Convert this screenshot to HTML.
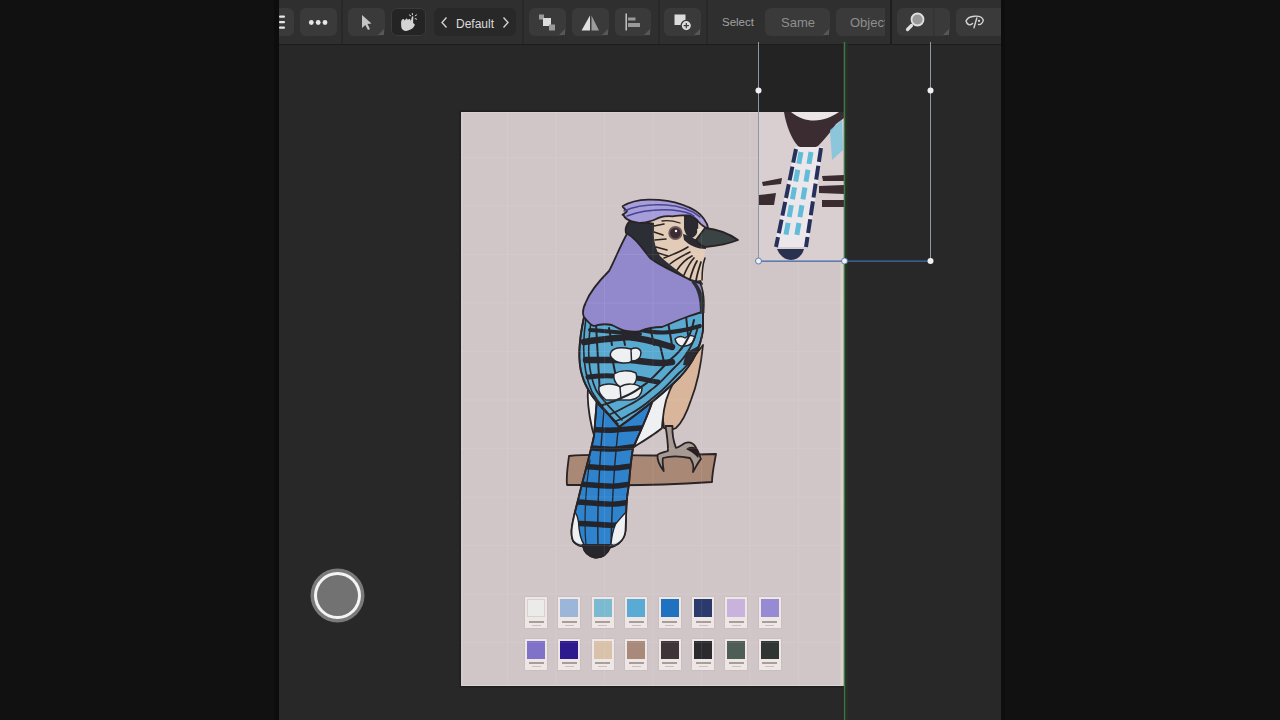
<!DOCTYPE html>
<html><head><meta charset="utf-8">
<style>
*{margin:0;padding:0;box-sizing:border-box}
html,body{width:1280px;height:720px;overflow:hidden;background:#111111;font-family:"Liberation Sans",sans-serif}
#strip{position:absolute;left:274px;top:0;width:5px;height:720px;background:#0d0d0d}
#strip2{position:absolute;left:1001px;top:0;width:4px;height:720px;background:#0e0e0e}
#panel{position:absolute;left:279px;top:0;width:722px;height:720px;background:#282828;overflow:hidden}
#tb{position:absolute;left:0;top:0;width:722px;height:45px;background:#2f2f2f;border-bottom:1px solid #1c1c1c}
.btn{position:absolute;top:8px;height:28px;background:#3a3a3a;border-radius:6px}
.sel{background:#242424;border:1px solid #3a3a3a}
.sep{position:absolute;top:0;width:2px;height:44px;background:#282828}
.corner{position:absolute;right:1px;bottom:1px;width:0;height:0;border-left:6px solid transparent;border-bottom:6px solid #575757}
.txt{position:absolute;color:#d6d6d6;font-size:12px;line-height:14px;white-space:nowrap}
#canvas{position:absolute;left:182px;top:112px;width:383px;height:574px;background:#d1c6c7;box-shadow:inset 2px 0 0 #d0cdd0,inset 0 -1px 0 #dcd5d8,inset 0 1px 0 #d9d0d2,0 0 0 1.5px #1f1f1f}
svg{position:absolute;left:0;top:0}
.sw{position:absolute;width:22px;height:31px;background:#eee7e5;box-shadow:0 0 1.5px rgba(0,0,0,0.12)}
.sw i{position:absolute;left:2px;top:2px;width:18px;height:18px;display:block}
.sw b{position:absolute;left:3.5px;top:23.5px;width:15px;height:2.2px;background:#8f8580;display:block;opacity:.75}
.sw u{position:absolute;left:6.5px;top:27.5px;width:9px;height:1px;background:#c9bfbc;display:block}
</style></head>
<body>
<div id="strip"></div><div id="strip2"></div>
<div id="panel">
  <div id="tb">
    <div class="btn" style="left:-20px;width:35px"></div>
    <div class="btn" style="left:21px;width:37px"></div>
    <div class="sep" style="left:62px"></div>
    <div class="btn" style="left:69px;width:37px"><div class="corner"></div></div>
    <div class="btn sel" style="left:112px;width:35px"></div>
    <div class="btn" style="left:155px;width:82px;background:#282828"></div>
    <div class="txt" style="left:177px;top:16.5px;font-size:12px;color:#dcdcdc">Default</div>
    <div class="sep" style="left:243px"></div>
    <div class="btn" style="left:250px;width:37px"><div class="corner"></div></div>
    <div class="btn" style="left:293px;width:37px"><div class="corner"></div></div>
    <div class="btn" style="left:336px;width:36px"><div class="corner"></div></div>
    <div class="sep" style="left:379px"></div>
    <div class="btn" style="left:385px;width:37px"><div class="corner"></div></div>
    <div class="sep" style="left:427px"></div>
    <div class="txt" style="left:443px;top:15px;color:#a2a2a2;font-size:11.5px">Select</div>
    <div class="btn" style="left:486px;width:65px"><div class="corner"></div></div>
    <div class="txt" style="left:502px;top:16px;color:#8e8e8e;font-size:13px">Same</div>
    <div class="btn" style="left:557px;width:49px;border-radius:6px 0 0 6px"></div>
    <div class="txt" style="left:571px;top:15.5px;color:#8e8e8e;font-size:13px;width:35px;overflow:hidden">Object</div>
    <div class="sep" style="left:611px;background:#1e1e1e"></div>
    <div class="btn" style="left:618px;width:53px"><div class="corner"></div></div>
    <div class="btn" style="left:677px;width:60px"></div>
  </div>
  <div id="canvas"></div>
  <div style="position:absolute;left:480px;top:45px;width:86px;height:67px;background:#232323"></div>
</div>

<svg width="1280" height="720" viewBox="0 0 1280 720">
<defs>
 <clipPath id="tailc"><path d="M597,398 L594,436 C590,455 584,475 578,500 C575,512 572,522 571.5,531 C571.5,537 572,540 574,542 C577,545 580,546 583,546 C584,551 588,556 595,557.5 C602,558 607,555 610,547.5 C614,546 617,545 619,543 C623,540 625,535 625.5,531 C626,523 626,513 626.5,505 C627,495 628,490 629,484 C630,470 631,460 633,448 C640,432 650,412 656,390 Z"/></clipPath>
 <clipPath id="wingc"><path d="M584,317 C579,340 578,362 582,375 C586,390 598,405 608,414 L619,427 C640,412 662,395 680,377 C694,362 701,345 703,330 L703,312 Z"/></clipPath>
</defs>
<g stroke="#2a2326" stroke-width="1.8" stroke-linejoin="round" stroke-linecap="round">
 <!-- perch -->
 <path d="M569,456 C600,453 640,457 680,455 L716,454 C714,465 712,474 712,482 C680,484 640,486 600,485 L567,485 C566,475 568,465 569,456 Z" fill="#a98876"/>
 <!-- tan belly -->
 <path d="M703,345 C701,365 697,385 691,400 C687,412 683,422 676,428 C672,430 668,430 664,428 C662,418 663,405 666,395 C668,388 672,382 680,375 Z" fill="#d8b59b"/>
 <!-- legs -->
 <path d="M665.5,426 C667,435 668,443 668,451 C664,452 659,453 657.5,455 C657,460 660,466 663.7,471 C663,465 662,461 663,458 C670,456 680,456 690,458 C693,462 694,467 693,472 C696,467 698,462 701,459 C699,453 697,449 695,446 C692,442 688,442 685,443 C682,445 679,447 676,448 C673,440 672,434 672.5,426 Z" fill="#a69a93"/>
 <path d="M686,449 C690,451 695,454 698,458 C699,456 700,453 697,449 C694,446 690,446 686,449 Z" fill="#2a1e22" stroke="none"/>
 <!-- white under feathers -->
 <path d="M680,372 C672,385 666,395 664,410 C663,418 662,424 662,428 C658,432 645,440 634,447 L654,390 C662,386 670,380 680,372 Z" fill="#eef0f2"/>
 <path d="M588,386 C587,400 589,415 592,428 C593,432 594,436 595,437 L598,400 Z" fill="#eef0f2"/>
 <!-- tail -->
 <path d="M597,398 L594,436 C590,455 584,475 578,500 C575,512 572,522 571.5,531 C571.5,537 572,540 574,542 C577,545 580,546 583,546 C584,551 588,556 595,557.5 C602,558 607,555 610,547.5 C614,546 617,545 619,543 C623,540 625,535 625.5,531 C626,523 626,513 626.5,505 C627,495 628,490 629,484 C630,470 631,460 633,448 C640,432 650,412 656,390 Z" fill="#2f82cc"/>
 <g clip-path="url(#tailc)" stroke="#23252c" fill="none">
  <path d="M570,429 C585,428 600,431 615,430 C630,429 645,427 660,428" stroke-width="5.5"/>
  <path d="M570,447 C585,446 600,450 615,449 C625,448 635,446 640,447" stroke-width="5.5"/>
  <path d="M570,466 C585,465 600,469 615,468 C625,467 635,465 640,466" stroke-width="5.5"/>
  <path d="M570,484 C585,483 600,487 615,486 C625,485 635,483 640,484" stroke-width="5.5"/>
  <path d="M570,502 C585,501 600,505 615,504 C625,503 635,501 640,502" stroke-width="5.5"/>
  <path d="M570,524 C585,522 600,526 615,525 C625,524 635,522 640,523" stroke-width="5.5"/>
  <path d="M605,400 C601,440 597,500 598,545" stroke-width="1.4"/>
  <path d="M622,400 C616,440 612,500 611,545" stroke-width="1.4"/>
  <path d="M590,460 C585,490 584,525 586,545" stroke-width="1.2"/>
  <path d="M568,504 C574,508 578,516 578.5,522 C579,532 581,540 584,544.5 L566,548 Z" fill="#eef0f2" stroke="#23252c" stroke-width="1.4"/>
  <path d="M630,508 C624,514 619,520 615.6,524 C613,530 611.5,538 611,544.5 L632,548 Z" fill="#eef0f2" stroke="#23252c" stroke-width="1.4"/>
  <path d="M568,536 C572,540 578,543 583,544 L566,548 Z M630,536 C624,540 617,543 611,544 L632,548 Z" fill="#c6daee" stroke="none"/>
  <path d="M583,544 C584,551 588,556 595,557.5 C602,558 607,555 610.5,544 Z" fill="#26262c" stroke="none"/>
 </g>
 <path d="M597,398 L594,436 C590,455 584,475 578,500 C575,512 572,522 571.5,531 C571.5,537 572,540 574,542 C577,545 580,546 583,546 C584,551 588,556 595,557.5 C602,558 607,555 610,547.5 C614,546 617,545 619,543 C623,540 625,535 625.5,531 C626,523 626,513 626.5,505 C627,495 628,490 629,484 C630,470 631,460 633,448 C640,432 650,412 656,390 Z" fill="none"/>
 <!-- wing -->
 <path d="M584,317 C579,340 578,362 582,375 C586,390 598,405 608,414 L619,427 C640,412 662,395 680,377 C694,362 701,345 703,330 L703,312 Z" fill="#58aad0"/>
 <g clip-path="url(#wingc)" fill="none" stroke="#26262c">
  <!-- top bar under purple -->
  <path d="M590,330 C605,331 620,333 640,334" stroke-width="4"/>
  <!-- dark bars -->
  <path d="M584,342 C595,340 605,339 628,337 C640,338 650,340 672,347" stroke-width="6.5"/>
  <path d="M586,360 C598,360 610,360 630,360 C645,361 655,365 672,362" stroke-width="6.5"/>
  <path d="M588,377 C598,376 606,375 612,376 M636,378 C645,379 650,381 658,382" stroke-width="5"/>
  <path d="M640,330 C655,333 670,335 700,326" stroke-width="4"/>
  <!-- vertical bars -->
  <path d="M596,324 L600,395 M609,328 L612,345 M613,362 L616,377 M622,330 L625,345 M650,326 L654,345 M660,345 L664,362 M668,322 L672,345 M686,316 L688,335" stroke-width="2"/>
  <!-- left edge strip lines -->
  <path d="M586,318 C582,345 583,372 592,392 C598,402 606,412 618,424" stroke-width="1.6"/>
  <path d="M591,322 C587,348 588,372 596,390 C602,400 610,408 622,420" stroke-width="1.6"/>
  <!-- scallops -->
  <path d="M611,352 C614,347 622,347 631,349 C636,347 640,348 641,352 C641,357 638,361 632,361 C628,364 617,364 613,359 C610,357 610,354 611,352 Z" fill="#eef0f2" stroke-width="1.5"/>
  <path d="M631,349 L631.5,361" stroke-width="1.5"/>
  <path d="M614,374 C620,370 630,370 636,373 C638,380 635,386 627,388 C618,388 613,382 614,374 Z" fill="#eef0f2" stroke-width="1.5"/>
  <path d="M599,387 C604,383 614,383 620,387 C626,383 636,383 642,388 C642,394 638,399 630,400 L606,400 C601,396 598,391 599,387 Z" fill="#eef0f2" stroke-width="1.5"/>
  <path d="M620,387 L621,399" stroke-width="1.5"/>
  <path d="M675,339 C678,336 682,336 685,338 C688,335 692,335 695,337 C694,342 690,346 685,346 C680,347 676,344 675,339 Z" fill="#eef0f2" stroke-width="1.4"/>
  <!-- band lines -->
  <path d="M694,320 C690,340 680,352 671,359 C660,370 655,376 648,382 C640,388 635,392 628,395 C618,400 610,403 600,406" stroke-width="2"/>
  <path d="M698,326 C694,345 686,357 675,367 C665,377 660,384 651,390 C643,397 636,402 627,406 C620,410 614,413 606,416" stroke-width="1.8"/>
  <path d="M702,336 C699,350 690,364 679,373 C670,382 664,390 654,397 C646,404 638,410 630,414 C624,418 618,421 612,422" stroke-width="1.8"/>
  <path d="M704,346 C700,360 692,370 682,378 C674,386 668,394 658,401 C650,408 642,414 634,419" stroke-width="1.8"/>
  <!-- dark shadow patch -->
  <path d="M686,352 C692,350 699,346 704,342 L704,360 C698,364 690,366 683,365 Z" fill="#2b2b31" stroke="none"/>
 </g>
 <path d="M584,317 C579,340 578,362 582,375 C586,390 598,405 608,414 L619,427 C640,412 662,395 680,377 C694,362 701,345 703,330 L703,312 Z" fill="none"/>
 <!-- purple back -->
 <path d="M628,232 C620,246 614,262 609,271 C600,280 590,292 586,302 C583,308 582,313 584,317 C588,322 592,326 594,326 C600,324 607,324 612,325 C616,327 620,330 626,331 C632,332 636,332 640,331 C648,328 655,327 662,327 C672,323 678,320 684,318 C692,315 698,313 703,312 C705,300 703,290 700,282 C690,276 670,268 655,260 C645,250 638,238 628,232 Z" fill="#9189cc"/>
 <!-- dark neck -->
 <path d="M630,221 C627,224 625,229 626,233 C636,238 642,248 650,258 C660,266 675,272 690,280 L702,284 C695,270 680,262 668,255 C660,245 655,235 654,224 C645,222 638,221 630,221 Z" fill="#2c2e35"/>
 <path d="M690,277 C697,282 702,290 704,300 L704.5,313 L700,313 C700,300 698,290 692,283 Z" fill="#2c2e35" stroke="none"/>
 <!-- face -->
 <path d="M654,222 C665,218 680,214 692,216 L706,228 L706,247 C704,255 702,265 704,279 C698,282 690,280 682,274 C674,268 666,262 660,256 C655,248 653,238 654,230 Z" fill="#e2ccb7" stroke="none"/>
 <g fill="none" stroke="#2a2326" stroke-width="1.6">
  <path d="M654,226 L664,224 M654,232 L663,235 M655,240 L666,239 M656,247 L667,250 M658,253 L668,256"/>
  <path d="M664,258 C672,255 680,252 688,247" stroke-width="1.5"/>
  <path d="M670,264 C676,259 684,255 690,252" stroke-width="1.6"/>
  <path d="M677,270 C681,264 686,259 692,256" stroke-width="1.7"/>
  <path d="M684,275 C687,268 690,262 694,258" stroke-width="1.7"/>
  <path d="M690,279 C692,272 694,266 697,261" stroke-width="1.8"/>
  <path d="M696,281 C697,274 699,268 701,262" stroke-width="1.8"/>
  <path d="M702,280 C702,273 702,266 705,258" stroke-width="1.6"/>
  <path d="M662,221 C668,220 674,221 680,223" stroke-width="1.3"/>
 </g>
 <path d="M684,215 C690,212 697,215 698,222 C699,230 697,236 692,238 C688,238 685,234 684,228 Z" fill="#2a2a30" stroke="none"/>
 <path d="M683,234 C690,236 696,240 706,244 L706,249 C698,249 690,246 684,240 Z" fill="#2a2a30" stroke="none"/>
 <path d="M697,229 L705,228 L705,238 L698,236 Z" fill="#e6dccb" stroke="none"/>
 <!-- crest -->
 <path d="M622.5,206.3 C628,203 638,200 648,199.7 C660,199.5 672,201 682,204.7 C692,208 700,213 704,219 C707,223 708,226 708.3,229 C704,227 700,224 697,220 C693,216 689,215 685.8,215.5 C680,215 675,216 673,216.3 C668,216 664,216 660.8,217.2 C656,219 654,220 652.5,220.5 C648,222 644,223 640,223 C636,222 633,222 631.7,221.3 C628,220 625,218 624,216 C624,215 622.5,215 622.5,214.7 C625,213 627,212 627,211 C625,209 623,208 622.5,206.3 Z" fill="#a59edb"/>
 <g fill="none" stroke="#4a4290" stroke-width="1.5">
  <path d="M624,211 C635,206 650,204 666,205 C680,206 692,210 700,217"/>
  <path d="M627,216 C640,211 655,209 672,210 C682,211 690,213 694,216"/>
 </g>
 <!-- beak -->
 <path d="M705,228 C715,229 728,233 738,240 C728,244 716,246 705,247 C700,245 697,242 696,240 Z" fill="#3a4445"/>
 <!-- eye -->
 <circle cx="675.4" cy="233" r="6.2" fill="#3c2c32" stroke="#6a5a5c" stroke-width="1.8"/>
 <circle cx="676" cy="231" r="1.2" fill="#fff" stroke="none"/>
</g>
</svg>

<div id="swatches"><div class="sw" style="left:525px;top:597px"><i style="background:#ebebea;box-shadow:inset 0 0 0 1px #d8d2d0;"></i><b></b><u></u></div>
<div class="sw" style="left:558.4px;top:597px"><i style="background:#9cb6da;"></i><b></b><u></u></div>
<div class="sw" style="left:591.8px;top:597px"><i style="background:#7cbad2;"></i><b></b><u></u></div>
<div class="sw" style="left:625.2px;top:597px"><i style="background:#5aaad6;"></i><b></b><u></u></div>
<div class="sw" style="left:658.6px;top:597px"><i style="background:#1f72c0;"></i><b></b><u></u></div>
<div class="sw" style="left:692px;top:597px"><i style="background:#2a3a6c;"></i><b></b><u></u></div>
<div class="sw" style="left:725.4px;top:597px"><i style="background:#c9b2dc;"></i><b></b><u></u></div>
<div class="sw" style="left:758.8px;top:597px"><i style="background:#968ad2;"></i><b></b><u></u></div>
<div class="sw" style="left:525px;top:638.5px"><i style="background:#7f72c8;"></i><b></b><u></u></div>
<div class="sw" style="left:558.4px;top:638.5px"><i style="background:#2c1a8e;"></i><b></b><u></u></div>
<div class="sw" style="left:591.8px;top:638.5px"><i style="background:#d9c1aa;"></i><b></b><u></u></div>
<div class="sw" style="left:625.2px;top:638.5px"><i style="background:#a98a7a;"></i><b></b><u></u></div>
<div class="sw" style="left:658.6px;top:638.5px"><i style="background:#3f3539;"></i><b></b><u></u></div>
<div class="sw" style="left:692px;top:638.5px"><i style="background:#2b2b2f;"></i><b></b><u></u></div>
<div class="sw" style="left:725.4px;top:638.5px"><i style="background:#4f5d57;"></i><b></b><u></u></div>
<div class="sw" style="left:758.8px;top:638.5px"><i style="background:#2f3533;"></i><b></b><u></u></div>
</div>
<svg width="1280" height="720" viewBox="0 0 1280 720">
 <!-- toolbar icons -->
 <g fill="#e6e6e6">
  <rect x="279" y="15.5" width="6" height="2.2" rx="1"/>
  <rect x="279" y="21" width="6" height="2.2" rx="1"/>
  <rect x="279" y="26.5" width="6" height="2.2" rx="1"/>
  <circle cx="311.3" cy="22.5" r="2.4"/><circle cx="318.2" cy="22.5" r="2.4"/><circle cx="325" cy="22.5" r="2.4"/>
 </g>
 <path d="M362,15 L362,28 L365.3,25 L368,30 L370,29 L367.5,24 L371.5,23.5 Z" fill="#c4c4c4"/>
 <g fill="#d4d4d4">
  <path d="M401.1,23.8 C401,21.5 401.5,20 402,19.8 C402.5,19 403,18.8 403.4,18.9 C404.2,19.2 404.5,20 404.7,20.7 C405.2,19.5 406,18.4 406.7,18.4 C407.5,18.5 407.8,19.5 407.8,20.2 C408.3,19.6 409,19 409.6,19.1 C410.3,19.3 410.7,20.3 410.9,21.1 L411.8,17.1 C412,16.4 412.4,16.1 412.7,16.2 C413.2,16.3 413.5,16.6 413.3,17.2 L413.1,22.9 C413.8,23.2 414.5,23.8 414.9,24.7 C414,26.8 412.8,28.3 411.3,29.1 C409.5,30.3 407.5,31 405.6,30.9 C403.8,30.8 402.2,29.6 401.6,28.2 C401.2,27 401.1,25.5 401.1,23.8 Z"/>
 </g>
 <g stroke="#d4d4d4" stroke-width="1" stroke-linecap="round">
  <path d="M409.3,14.9 L410.8,15.9 M412.3,13.4 L412.4,14.8 M415.2,15.8 L416.6,14.9 M415.1,18.6 L416.6,19.2"/>
 </g>
 <path d="M446.5,17.5 L442,22.5 L446.5,27.5" stroke="#d0d0d0" stroke-width="1.4" fill="none"/>
 <path d="M503.5,17.5 L508,22.5 L503.5,27.5" stroke="#d0d0d0" stroke-width="1.4" fill="none"/>
 <g>
  <rect x="539" y="14.5" width="5" height="5" fill="#9a9a9a"/>
  <rect x="543" y="18" width="8" height="8" fill="#dcdcdc"/>
  <rect x="549" y="24.5" width="6" height="6" fill="#9a9a9a"/>
 </g>
 <path d="M590,15.5 L590,30.5 L581.5,30.5 Z" fill="#e0e0e0"/>
 <path d="M591.5,15.5 L591.5,30.5 L599,30.5 Z" fill="#9c9c9c"/>
 <rect x="625.5" y="13.5" width="1.4" height="17" fill="#d0d0d0"/>
 <rect x="628" y="17.5" width="7.5" height="3" fill="#9a9a9a"/>
 <rect x="628" y="23" width="12" height="4" fill="#9a9a9a"/>
 <rect x="674.5" y="14.5" width="11" height="10.5" fill="#dcdcdc"/>
 <circle cx="686.3" cy="25.6" r="5.2" fill="#dcdcdc" stroke="#3a3a3a" stroke-width="1.3"/>
 <path d="M686.3,23 V28.2 M683.7,25.6 H688.9" stroke="#3a3a3a" stroke-width="1.2"/>
 <circle cx="917.5" cy="19.5" r="6" fill="#9a9a9a" stroke="#e0e0e0" stroke-width="1.8"/>
 <path d="M911.5,25.5 L907.5,29.5" stroke="#e0e0e0" stroke-width="3.2" stroke-linecap="round"/>
 <path d="M966,21 C968,15.5 981,14 983.3,20 C983,23 980.5,25 978.5,24.5 M966,21 C967,24 968.5,25 970,24.8 C971,24.6 972,24 972.6,23.5 M976.8,18 L974,27.8" stroke="#d4d4d4" stroke-width="1.4" fill="none" stroke-linecap="round"/>
 <circle cx="979" cy="20.8" r="1.1" fill="#e8e8e8"/>
 <rect x="933.5" y="8" width="1" height="28" fill="#303030"/>

 <!-- grid -->
 <g fill="#ffffff" opacity="0.08">
  <rect x="507" y="112" width="1" height="574"/>
  <rect x="555.5" y="112" width="1" height="574"/>
  <rect x="604" y="112" width="1" height="574"/>
  <rect x="652.5" y="112" width="1" height="574"/>
  <rect x="701" y="112" width="1" height="574"/>
  <rect x="749.5" y="112" width="1" height="574"/>
  <rect x="798" y="112" width="1" height="574"/>
  <rect x="461" y="157" width="383" height="1"/>
  <rect x="461" y="205.5" width="383" height="1"/>
  <rect x="461" y="254" width="383" height="1"/>
  <rect x="461" y="302.5" width="383" height="1"/>
  <rect x="461" y="351" width="383" height="1"/>
  <rect x="461" y="399.5" width="383" height="1"/>
  <rect x="461" y="448" width="383" height="1"/>
  <rect x="461" y="496.5" width="383" height="1"/>
  <rect x="461" y="545" width="383" height="1"/>
  <rect x="461" y="593.5" width="383" height="1"/>
  <rect x="461" y="642" width="383" height="1"/>
 </g>

 <!-- cropped image in selection -->
 <g>
  <rect x="758.5" y="112" width="85.5" height="149" fill="#d9cfd0"/>
  <path d="M784,112 C786,125 792,140 798,146 C803,149 812,149 818,146 C826,138 832,130 836,124 L844,118 L844,112 Z" fill="#3b2c31"/>
  <path d="M791,112 C798,118 806,120.5 814,120.5 C824,120 832,117 839,112 Z" fill="#ece6e6"/>
  <path d="M795,147 L774,247 L808,247 L823,147 Z" fill="#ebe7eb"/>
  <g stroke="#26305a" stroke-width="4" stroke-dasharray="14 4" fill="none">
   <path d="M796,149 L776,247"/>
   <path d="M821,148 L806,247"/>
  </g>
  <g stroke="#62bcd8" stroke-width="5" stroke-dasharray="12 6" fill="none">
   <path d="M801,152 L785,240"/>
   <path d="M811,152 L796,240"/>
  </g>
  <path d="M830,130 L842,120 L843,150 L832,160 Z" fill="#7cc4dc" opacity="0.85"/>
  <path d="M777,249 C780,256 785,260 791,260 C797,260 802,256 804,249 Z" fill="#2a3050"/>
  <g fill="#3a2c30">
   <path d="M762,182 L782,178 L781,184 L763,186 Z"/>
   <path d="M759,195 L776,193 L774,205 L759,205 Z"/>
   <path d="M822,176 L844,175 L844,181 L823,181 Z"/>
   <path d="M819,186 L844,185 L844,194 L819,193 Z"/>
   <path d="M822,200 L844,200 L844,207 L822,207 Z"/>
  </g>
 </g>
 <!-- selection box -->
 <g>
  <rect x="758" y="42" width="1" height="219" fill="#8c98a8"/>
  <rect x="930" y="42" width="1" height="219" fill="#8c98a8"/>
  <rect x="840.5" y="262" width="3" height="424" fill="#d8d4ca"/>
  <rect x="843.7" y="42" width="1.5" height="678" fill="#4a704c"/>
  <rect x="845.2" y="42" width="1.2" height="678" fill="#1f4a22"/>
  <rect x="846.4" y="44" width="1.5" height="676" fill="#2b2e26"/>
  <rect x="842.7" y="686" width="1" height="34" fill="#232a22"/>
  <rect x="758" y="260.5" width="172" height="1.3" fill="#3e6aa8"/>
  <circle cx="758.5" cy="90.5" r="3" fill="#f0f0f0"/>
  <circle cx="930.5" cy="90.5" r="3" fill="#f0f0f0"/>
  <circle cx="758.5" cy="261" r="3" fill="#f0f0f0" stroke="#3e6aa8" stroke-width="0.8"/>
  <circle cx="844.5" cy="261" r="3" fill="#f0f0f0" stroke="#3e6aa8" stroke-width="0.8"/>
  <circle cx="930.5" cy="261" r="3" fill="#f0f0f0"/>
 </g>
 <!-- record button -->
 <circle cx="337.5" cy="595.5" r="27" fill="#7a7a7a"/>
 <circle cx="337.5" cy="595.5" r="23.5" fill="#f4f4f4"/>
 <circle cx="337.5" cy="595.5" r="20.5" fill="#727272"/>
</svg>


</body></html>
